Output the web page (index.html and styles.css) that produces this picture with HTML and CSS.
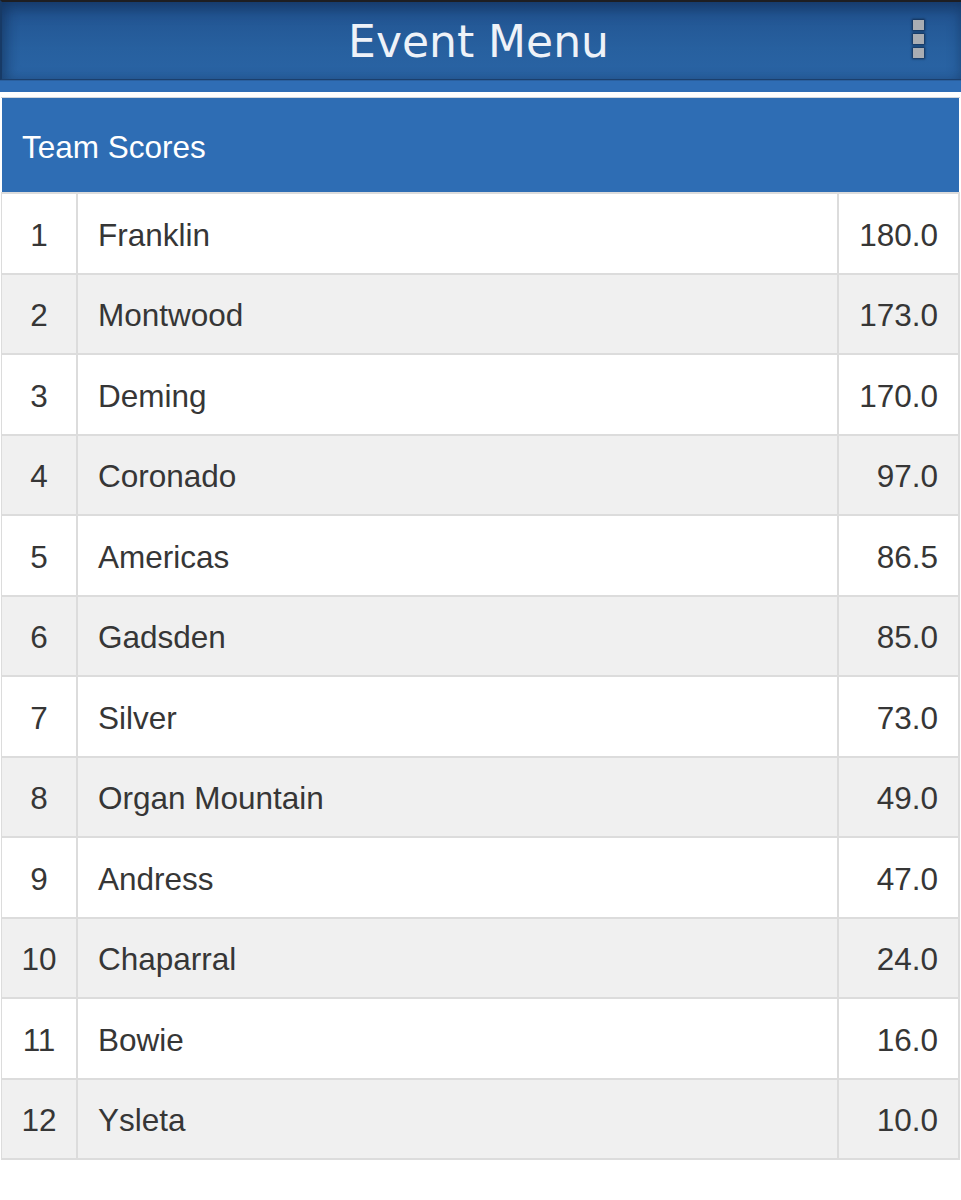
FILE: index.html
```html
<!DOCTYPE html>
<html>
<head>
<meta charset="utf-8">
<title>Event Menu</title>
<link rel="stylesheet" href="styles.css">
</head>
<body>
<header class="topbar">
  <h1 class="topbar-title">Event Menu</h1>
  <div class="menu-btn"><span></span><span></span><span></span></div>
</header>
<div class="strip"></div>
<main class="content">
  <section class="panel">
    <h2 class="panel-title">Team Scores</h2>
    <div class="scores">
      <div class="row"><div class="rank">1</div><div class="team">Franklin</div><div class="score">180.0</div></div>
      <div class="row alt"><div class="rank">2</div><div class="team">Montwood</div><div class="score">173.0</div></div>
      <div class="row"><div class="rank">3</div><div class="team">Deming</div><div class="score">170.0</div></div>
      <div class="row alt"><div class="rank">4</div><div class="team">Coronado</div><div class="score">97.0</div></div>
      <div class="row"><div class="rank">5</div><div class="team">Americas</div><div class="score">86.5</div></div>
      <div class="row alt"><div class="rank">6</div><div class="team">Gadsden</div><div class="score">85.0</div></div>
      <div class="row"><div class="rank">7</div><div class="team">Silver</div><div class="score">73.0</div></div>
      <div class="row alt"><div class="rank">8</div><div class="team">Organ Mountain</div><div class="score">49.0</div></div>
      <div class="row"><div class="rank">9</div><div class="team">Andress</div><div class="score">47.0</div></div>
      <div class="row alt"><div class="rank">10</div><div class="team">Chaparral</div><div class="score">24.0</div></div>
      <div class="row"><div class="rank">11</div><div class="team">Bowie</div><div class="score">16.0</div></div>
      <div class="row alt"><div class="rank">12</div><div class="team">Ysleta</div><div class="score">10.0</div></div>
    </div>
  </section>
</main>
</body>
</html>
```

FILE: styles.css
```css
* { box-sizing: border-box; }
html, body { margin: 0; padding: 0; background: #fff; }
body { font-family: "Liberation Sans", Arial, sans-serif; color: #333; }

.topbar {
  position: relative;
  height: 80px;
  border-top: 2px solid #1e1e22;
  border-left: 2px solid #173a66;
  border-bottom: 1px solid #1b3f6d;
  background: linear-gradient(180deg, #21528f 0%, #27609f 60%, #2a64a5 100%);
  box-shadow: inset 0 8px 14px rgba(10, 30, 60, 0.35), inset 6px 0 12px rgba(10, 30, 60, 0.25);
  display: flex;
  align-items: center;
  justify-content: center;
}
.topbar-title {
  margin: 0 6px 0 0;
  font-family: "DejaVu Sans", Verdana, sans-serif;
  font-weight: normal;
  font-size: 44px;
  color: #eef2f8;
  line-height: 1;
  padding-top: 2px;
}
.menu-btn {
  position: absolute;
  right: 37px;
  top: 18px;
  display: flex;
  flex-direction: column;
  gap: 4px;
}
.menu-btn span {
  width: 11px;
  height: 10px;
  background: #a9adb3;
  box-shadow: 0 0 2px 1px rgba(15, 35, 65, 0.8);
}

.strip {
  height: 12px;
  background: #2f6db5;
  border-top: 1px solid #2a5f9e;
}

.content {
  padding: 5px 1px 0 1px;
}
.panel {
  border-top: 1px solid #d4d8dd;
}
.panel-title {
  margin: 0 1px;
  height: 95px;
  background: #2e6db4;
  color: #fff;
  font-weight: normal;
  font-size: 31.5px;
  display: flex;
  align-items: center;
  padding-left: 20px;
  padding-top: 4px;
}
.scores {
  background: #dcdcdc;
  padding: 2px 2px 2px 1px;
  display: flex;
  flex-direction: column;
  gap: 2px;
  margin-top: -1px;
}
.row {
  display: grid;
  grid-template-columns: 74px 1fr 119px;
  gap: 2px;
  height: 78.5px;
}
.row > div {
  background: #fff;
  display: flex;
  align-items: center;
  font-size: 31.5px;
  color: #363636;
  padding-top: 4px;
}
.row.alt > div { background: #f0f0f0; }
.rank { justify-content: center; }
.team { padding-left: 20px; }
.score { justify-content: flex-end; padding-right: 20px; }
```
